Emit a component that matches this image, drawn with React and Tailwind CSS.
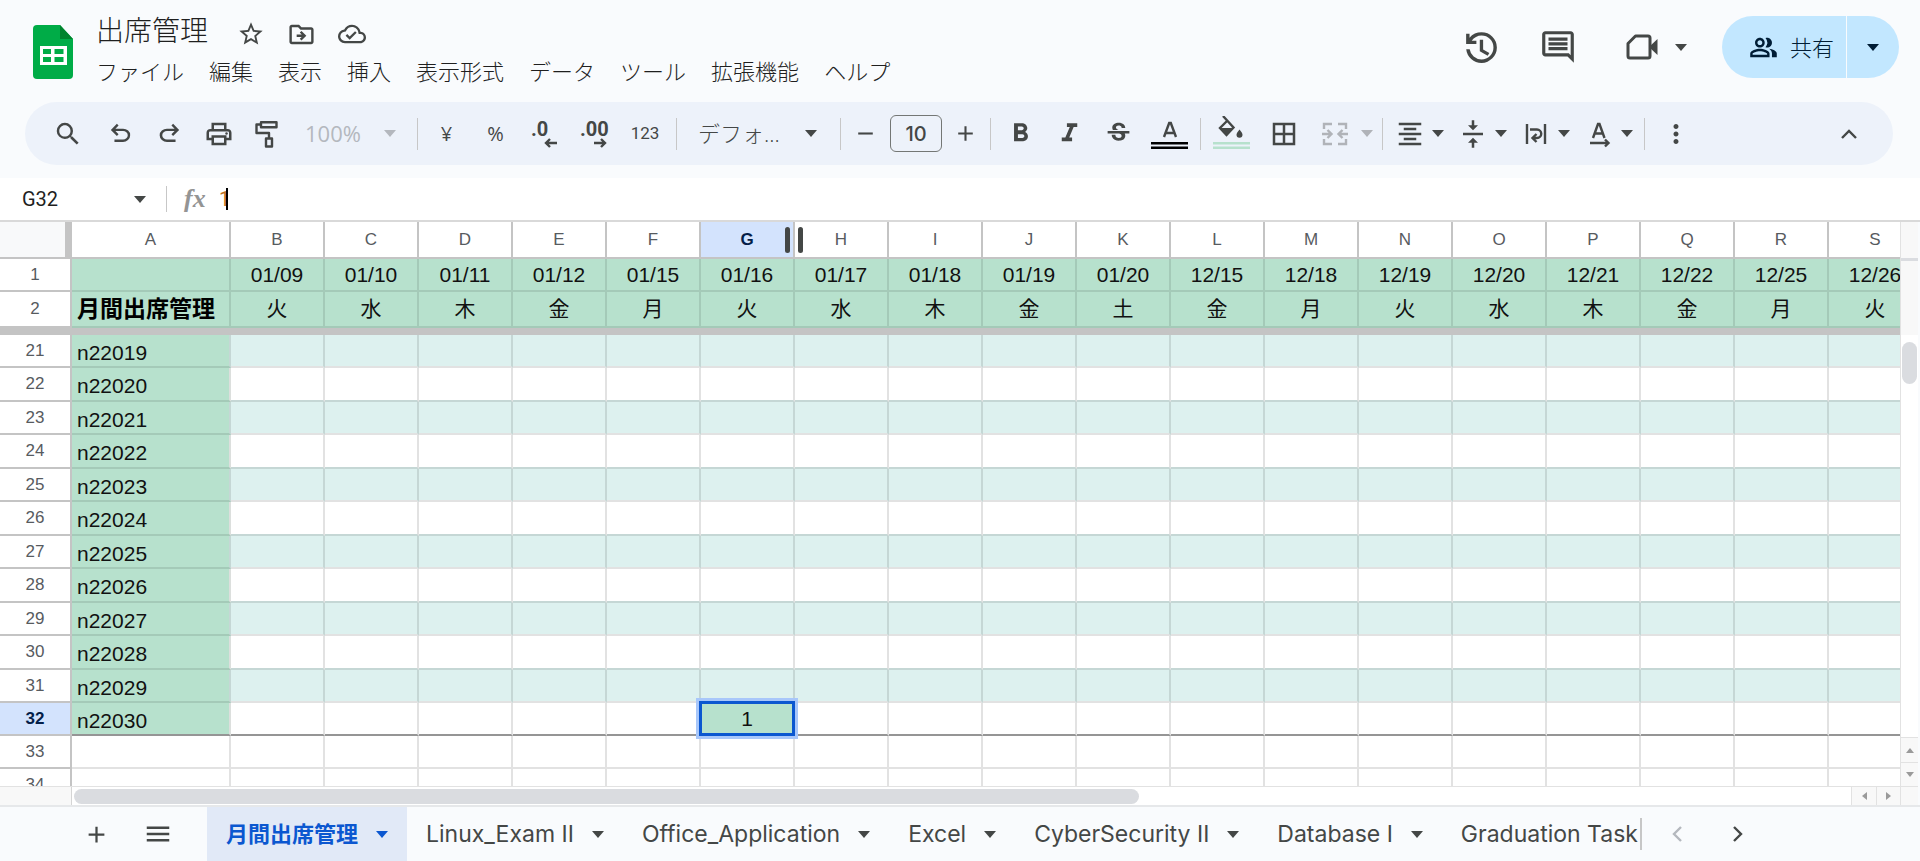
import {
  MdStarBorder,
  MdOutlineDriveFileMove,
  MdOutlineCloudDone,
  MdOutlineInsertComment,
  MdOutlinePeopleAlt,
  MdSearch,
  MdOutlinePrint,
  MdFormatBold,
  MdFormatItalic,
  MdStrikethroughS,
  MdBorderAll,
  MdFormatAlignCenter,
  MdVerticalAlignCenter,
  MdMoreVert,
  MdAdd,
  MdRemove,
  MdMenu,
} from 'react-icons/md';

const MENUS = ['ファイル', '編集', '表示', '挿入', '表示形式', 'データ', 'ツール', '拡張機能', 'ヘルプ'];

const COLUMNS = [
  ['B', '01/09', '火'],
  ['C', '01/10', '水'],
  ['D', '01/11', '木'],
  ['E', '01/12', '金'],
  ['F', '01/15', '月'],
  ['G', '01/16', '火'],
  ['H', '01/17', '水'],
  ['I', '01/18', '木'],
  ['J', '01/19', '金'],
  ['K', '01/20', '土'],
  ['L', '12/15', '金'],
  ['M', '12/18', '月'],
  ['N', '12/19', '火'],
  ['O', '12/20', '水'],
  ['P', '12/21', '木'],
  ['Q', '12/22', '金'],
  ['R', '12/25', '月'],
  ['S', '12/26', '火'],
];

const STUDENT_ROWS = Array.from({ length: 12 }, (_, i) => ({ row: 21 + i, id: `n220${19 + i}` }));

const SHEETS = ['Linux_Exam II', 'Office_Application', 'Excel', 'CyberSecurity II', 'Database I'];

const JP = "font-['Liberation_Sans','Noto_Sans_CJK_JP',sans-serif]";
const UI = "font-['Open_Sans','Noto_Sans_CJK_JP',sans-serif]";
const TAB = "font-['Inter','Noto_Sans_CJK_JP',sans-serif]";

function Caret({ className = '' }) {
  return (
    <svg viewBox="0 0 12 7" className={`h-[7px] w-3 shrink-0 fill-current ${className}`} aria-hidden="true">
      <path d="M0 0h12L6 7z" />
    </svg>
  );
}

function Symbol({ d, className = '' }) {
  return (
    <svg viewBox="0 -960 960 960" className={`shrink-0 fill-current ${className}`} aria-hidden="true">
      <path d={d} />
    </svg>
  );
}

const UNDO =
  'M280-200v-80h284q63 0 109.5-40T720-420q0-60-46.5-100T564-560H312l104 104-56 56-200-200 200-200 56 56-104 104h252q97 0 169.5 63T800-420q0 94-72.5 157T564-200H280Z';
const REDO =
  'M396-200q-97 0-169.5-63T154-420q0-94 72.5-157T396-640h252L544-744l56-56 200 200-200 200-56-56 104-104H396q-63 0-109.5 40T240-420q0 60 46.5 100T396-280h284v80H396Z';
const HISTORY =
  'M480-120q-138 0-240.5-91.5T122-440h82q14 104 92.5 172T480-200q117 0 198.5-81.5T760-480q0-117-81.500-198.500T480-760q-69 0-129 32t-101 88h110v80H120v-240h80v94q51-64 124.5-99T480-840q75 0 140.5 28.5t114 77q48.5 48.5 77 114T840-480q0 75-28.5 140.5t-77 114q-48.5 48.5-114 77T480-120Zm145-165L440-390v-270h78v224l145 85Z';

function Tool({ label, className = 'w-[49px]', children }) {
  return (
    <button type="button" aria-label={label} className={`flex h-12 shrink-0 items-center justify-center ${className}`}>
      {children}
    </button>
  );
}

function MenuTool({ label, className = '', children }) {
  return (
    <button type="button" aria-label={label} className={`flex h-12 shrink-0 items-center ${className}`}>
      {children}
      <Caret />
    </button>
  );
}

function Divider() {
  return <span className="mx-1 h-8 w-px shrink-0 bg-[#c7c7c7]" />;
}

function Header() {
  return (
    <header className="flex h-[102px] shrink-0 items-start">
      <a href="#home" aria-label="スプレッドシート ホーム" className="mt-[25px] ml-[33px] shrink-0">
        <svg viewBox="0 0 40 54" className="h-[54px] w-10">
          <path d="M4 0h23l13 14v36a4 4 0 0 1-4 4H4a4 4 0 0 1-4-4V4a4 4 0 0 1 4-4z" fill="#00ac47" />
          <path d="M27 0l13 14H27z" fill="#00832d" />
          <path
            d="M7 21h27v19H7zM10 24v5h8v-5zM21.500 24v5h9v-5zM10 32v5h8v-5zM21.500 32v5h9v-5z"
            fill="#fff"
            fillRule="evenodd"
          />
        </svg>
      </a>
      <div className="ml-[23px] flex flex-col pt-2 whitespace-nowrap">
        <div className="flex h-11 items-center gap-[22px] text-[#444746]">
          <h1 className="text-[28px] leading-[45px] font-light text-[#1f1f1f]">出席管理</h1>
          <button type="button" aria-label="スター" className="mt-2 ml-[7px]">
            <MdStarBorder size={28} />
          </button>
          <button type="button" aria-label="移動" className="mt-2">
            <MdOutlineDriveFileMove size={29} />
          </button>
          <button type="button" aria-label="保存済み" className="mt-2">
            <MdOutlineCloudDone size={28} />
          </button>
        </div>
        <nav className="flex h-[38px] items-center gap-[25px] text-[22px] font-light text-[#1f1f1f]">
          {MENUS.map((m) => (
            <button type="button" key={m}>
              {m}
            </button>
          ))}
        </nav>
      </div>
      <div className="mt-4 mr-[21px] ml-auto flex h-[62px] shrink-0 items-center text-[#444746]">
        <button type="button" aria-label="変更履歴" className="mr-[37px]">
          <Symbol d={HISTORY} className="h-[41px] w-[41px]" />
        </button>
        <button type="button" aria-label="コメント" className="mr-[49px]">
          <MdOutlineInsertComment size={38} />
        </button>
        <button type="button" aria-label="ビデオ通話" className="mr-[35px] flex items-center gap-[17px]">
          <svg viewBox="0 0 32 26" className="h-[26px] w-8" aria-hidden="true">
            <path
              d="M9.500 2H22a2 2 0 0 1 2 2v18a2 2 0 0 1-2 2H4a2 2 0 0 1-2-2V9.500z"
              fill="none"
              stroke="currentColor"
              strokeWidth="3"
              strokeLinejoin="round"
            />
            <path d="M23 13l8.500-8v16z" fill="currentColor" />
          </svg>
          <Caret />
        </button>
        <div className="flex h-[62px] overflow-hidden rounded-full text-[#001d35]">
          <button type="button" className="flex w-[124px] items-center gap-3 bg-[#c2e7ff] pl-[27px] text-[22px] font-light">
            <MdOutlinePeopleAlt size={29} />
            共有
          </button>
          <button type="button" aria-label="共有オプション" className="ml-px flex w-[52px] items-center justify-center bg-[#c2e7ff]">
            <Caret />
          </button>
        </div>
      </div>
    </header>
  );
}

function Toolbar() {
  return (
    <div
      role="toolbar"
      className="mr-[27px] ml-[25px] flex h-[63px] shrink-0 items-center rounded-full bg-[#edf2fa] pl-[18px] text-[#444746]"
    >
      <Tool label="検索" className="mr-[4px] w-[49px]">
        <MdSearch size={30} />
      </Tool>
      <Tool label="元に戻す">
        <Symbol d={UNDO} className="h-[29px] w-[29px]" />
      </Tool>
      <Tool label="やり直し">
        <Symbol d={REDO} className="h-[29px] w-[29px]" />
      </Tool>
      <Tool label="印刷">
        <MdOutlinePrint size={30} />
      </Tool>
      <Tool label="書式を貼り付け">
        <svg viewBox="0 0 28 28" className="h-7 w-7 fill-none stroke-current stroke-[2.4]" strokeLinejoin="round" aria-hidden="true">
          <path d="M7 2.200h15.500v5H7zM7 4.500H2.500v8.500h12.500v5.500M12 18.500h6v8h-6z" />
        </svg>
      </Tool>
      <label className="flex h-12 w-[121px] shrink-0 items-center pl-[13px] text-[#b4b8be]">
        <select aria-label="ズーム" disabled className="w-[71px] appearance-none bg-transparent text-[22px] opacity-100">
          <option>100%</option>
        </select>
        <Caret className="ml-2" />
      </label>
      <Divider />
      <Tool label="通貨">
        <span className="text-[20px]">¥</span>
      </Tool>
      <Tool label="パーセント">
        <span className="text-[20px]">%</span>
      </Tool>
      <Tool label="小数点以下を減らす">
        <svg viewBox="0 -9 32 48" className="h-12 w-8 font-['Roboto',sans-serif]" aria-hidden="true">
          <text x="2" y="17" fontSize="20" fontWeight="700" fill="currentColor">
            .0
          </text>
          <path d="M28 24H17M21 20l-4 4 4 4" fill="none" stroke="currentColor" strokeWidth="2.400" />
        </svg>
      </Tool>
      <Tool label="小数点以下を増やす">
        <svg viewBox="0 -9 32 48" className="h-12 w-8 font-['Roboto',sans-serif]" aria-hidden="true">
          <text x="2" y="17" fontSize="20" fontWeight="700" fill="currentColor">
            .00
          </text>
          <path d="M16 24h11M23 20l4 4-4 4" fill="none" stroke="currentColor" strokeWidth="2.400" />
        </svg>
      </Tool>
      <Tool label="表示形式の詳細設定" className="w-[54px]">
        <span className="font-['Roboto',sans-serif] text-[17px]">123</span>
      </Tool>
      <Divider />
      <label className="flex h-12 w-[155px] shrink-0 items-center pl-[17px]">
        <select aria-label="フォント" className="w-[90px] appearance-none bg-transparent text-[22px] font-light">
          <option>デフォ...</option>
        </select>
        <Caret className="ml-[17px]" />
      </label>
      <Divider />
      <Tool label="フォントサイズを縮小" className="w-[41px]">
        <MdRemove size={25} />
      </Tool>
      <input
        aria-label="フォントサイズ"
        defaultValue="10"
        className={`mr-0.5 ml-1 h-[37px] w-[52px] shrink-0 rounded-md border border-[#747775] bg-transparent text-center text-[20px] font-medium ${TAB}`}
      />
      <Tool label="フォントサイズを拡大" className="w-[42px]">
        <MdAdd size={25} />
      </Tool>
      <Divider />
      <Tool label="太字" className="w-[50px]">
        <MdFormatBold size={31} />
      </Tool>
      <Tool label="斜体">
        <MdFormatItalic size={31} />
      </Tool>
      <Tool label="取り消し線">
        <MdStrikethroughS size={29} />
      </Tool>
      <Tool label="テキストの色" className="w-[53px]">
        <svg viewBox="0 0 38 36" className="h-9 w-[38px]" aria-hidden="true">
          <path d="M13 21L18.200 7h1.600L25 21M15 17h8" fill="none" stroke="currentColor" strokeWidth="2.400" />
          <path d="M0 26h37v2.500H0zM0 30.500h37V33H0z" fill="#000" />
        </svg>
      </Tool>
      <Divider />
      <Tool label="塗りつぶしの色" className="w-[54px]">
        <svg viewBox="0 0 38 36" className="h-9 w-[38px]" aria-hidden="true">
          <path d="M10 0l10.500 11.500L13.500 19 7 12l7.500-7.500" fill="none" stroke="currentColor" strokeWidth="2.400" />
          <path d="M7 12h13.500l-7 7.500z" fill="currentColor" />
          <path d="M26.500 13.500c2 2.500 3 3.800 3 5.200a3 3 0 0 1-6 0c0-1.400 1-2.700 3-5.200z" fill="currentColor" />
          <path d="M0 26h37v2.500H0zM0 30.500h37V33H0z" fill="#b7e1cd" />
        </svg>
      </Tool>
      <Tool label="枠線">
        <MdBorderAll size={30} />
      </Tool>
      <MenuTool label="セルを結合" className="w-[70px] gap-[13px] pl-[14px] text-[#b0b3b8]">
        <svg viewBox="0 0 26 24" className="h-6 w-[26px] fill-none stroke-current stroke-[2.4]" aria-hidden="true">
          <path d="M2 7V2h8M16 2h8v5M2 17v5h8M16 22h8v-5M0 12h9M5.500 8L9.500 12l-4 4M26 12h-9M20.500 8l-4 4 4 4" />
        </svg>
      </MenuTool>
      <Divider />
      <MenuTool label="水平方向の配置" className="w-[63px] gap-[7px] pl-2">
        <MdFormatAlignCenter size={30} />
      </MenuTool>
      <MenuTool label="垂直方向の配置" className="w-[63px] gap-[7px] pl-2">
        <MdVerticalAlignCenter size={30} />
      </MenuTool>
      <MenuTool label="折り返し" className="w-[63px] gap-[7px] pl-2">
        <svg viewBox="0 0 30 30" className="h-[30px] w-[30px] fill-none stroke-current stroke-[2.4]" aria-hidden="true">
          <path d="M6 5v20M24 5v20M9 10.500h7a4 4 0 0 1 0 8.500h-4M15.500 15L11.500 19l4 4" />
        </svg>
      </MenuTool>
      <MenuTool label="回転" className="w-[64px] gap-[7px] pl-2">
        <svg viewBox="0 0 30 30" className="h-[30px] w-[30px] fill-none stroke-current stroke-[2.4]" aria-hidden="true">
          <path d="M9 19L14 5h1.500l5 14M10.500 14.500H19M6 24h18M21 20.500l3.500 3.500-3.500 3.500" />
        </svg>
      </MenuTool>
      <Divider />
      <Tool label="その他" className="w-[54px]">
        <MdMoreVert size={30} />
      </Tool>
      <Tool label="メニューを非表示" className="mr-5 ml-auto w-12">
        <svg viewBox="0 0 18 12" className="h-3 w-[18px] fill-none stroke-current stroke-[2.4]" aria-hidden="true">
          <path d="M2 10l7-7 7 7" />
        </svg>
      </Tool>
    </div>
  );
}

function FormulaBar() {
  return (
    <div className="flex h-11 shrink-0 items-center border-b-2 border-[#d9d9d9] bg-white pl-[22px]">
      <input
        aria-label="名前ボックス"
        defaultValue="G32"
        className="w-28 bg-transparent font-['Roboto',sans-serif] text-[20px] text-[#1f1f1f]"
      />
      <Caret className="text-[#444746]" />
      <span className="ml-5 h-[26px] w-px bg-[#c7c7c7]" />
      <span className="ml-[17px] w-[35px] font-['Liberation_Serif',serif] text-[26px] leading-6 font-bold text-[#949494] italic">fx</span>
      <input
        aria-label="数式バー"
        defaultValue="1"
        className="w-[7px] bg-transparent font-['Roboto',sans-serif] text-[20px] text-[#c0701a]"
      />
      <span className="h-[22px] w-0.5 bg-black" />
    </div>
  );
}

function Grid() {
  const rowHead = 'border-r-2 border-b-2 border-[#c4c4c4] p-0 text-[17px] text-center';
  const greenCell = 'border-r-2 border-b-2 border-[#a4cab8] bg-[#b7e1cd] p-0';
  return (
    <div className={`min-w-0 flex-1 overflow-hidden bg-white ${JP}`}>
      <table className="w-[1923px] table-fixed border-separate border-spacing-0 text-[21px] leading-6 text-[#111]">
        <colgroup>
          <col className="w-[72px]" />
          <col className="w-[159px]" />
          {COLUMNS.map(([c]) => (
            <col key={c} className="w-[94px]" />
          ))}
        </colgroup>
        <thead>
          <tr className="h-[37px] text-[17px] text-[#575b5f]">
            <td className="border-r-[7px] border-b-2 border-[#c4c4c4] bg-[#f8f9fa] p-0" />
            <th scope="col" className="border-r-2 border-b-2 border-[#c4c4c4] p-0 font-normal">
              A
            </th>
            {COLUMNS.map(([c]) =>
              c === 'G' ? (
                <th key={c} scope="col" className="relative border-r-2 border-b-2 border-[#c4c4c4] bg-[#d3e3fd] p-0 font-bold text-[#041e49]">
                  G
                  <span className="absolute top-[5px] right-[3px] h-[26px] w-[5px] rounded-sm bg-[#444746]" />
                  <span className="absolute top-[5px] -right-[10px] h-[26px] w-[5px] rounded-sm bg-[#444746]" />
                </th>
              ) : (
                <th key={c} scope="col" className="border-r-2 border-b-2 border-[#c4c4c4] p-0 font-normal">
                  {c}
                </th>
              ),
            )}
          </tr>
        </thead>
        <tbody>
          <tr className="h-[33px]">
            <th scope="row" className={`${rowHead} font-normal text-[#575b5f]`}>
              1
            </th>
            <td className={greenCell} />
            {COLUMNS.map(([c, date]) => (
              <td key={c} className={`${greenCell} text-center`}>
                {date}
              </td>
            ))}
          </tr>
          <tr className="h-9">
            <th scope="row" className={`${rowHead} border-b-0 font-normal text-[#575b5f]`}>
              2
            </th>
            <td className="overflow-hidden border-r-2 border-b-2 border-[#a4cab8] bg-[#b7e1cd] p-0 pl-[5px] text-[23px] font-bold whitespace-nowrap text-black">
              月間出席管理
            </td>
            {COLUMNS.map(([c, , day]) => (
              <td key={c} className={`${greenCell} text-center`}>
                {day}
              </td>
            ))}
          </tr>
          <tr className="h-[7px]">
            <td colSpan={20} className="bg-[#c4c4c4] p-0" />
          </tr>
          {STUDENT_ROWS.map(({ row, id }) => {
            const banded = row % 2 === 1;
            const last = row === 32;
            const line = last
              ? 'border-b-[#959595]'
              : banded
                ? 'border-b-[#e2e2e2]'
                : 'border-b-[#c5d7d5]';
            return (
              <tr key={row} className={banded || last ? 'h-[33px]' : 'h-[34px]'}>
                <th
                  scope="row"
                  className={`${rowHead} ${last ? 'bg-[#d3e3fd] font-bold text-[#041e49]' : 'font-normal text-[#575b5f]'}`}
                >
                  {row}
                </th>
                <td
                  className={`border-r-2 border-b-2 bg-[#b7e1cd] p-0 pt-1 pl-[5px] ${banded ? 'border-r-[#c5d7d5]' : 'border-r-[#dcdfdd]'} ${last ? 'border-b-[#959595]' : 'border-b-[#a4cab8]'}`}
                >
                  {id}
                </td>
                {COLUMNS.map(([c]) =>
                  last && c === 'G' ? (
                    <td key={c} className="relative border-r-2 border-b-2 border-[#959595] bg-[#b7e1cd] p-0 text-center">
                      1
                      <span className="absolute -inset-0.5 border-[3px] border-[#0b57d0] ring-[3px] ring-[#a8c7fa]" />
                    </td>
                  ) : (
                    <td
                      key={c}
                      className={`border-r-2 border-b-2 p-0 ${line} ${banded ? 'border-r-[#c5d7d5] bg-[#ddf1ef]' : 'border-r-[#e2e2e2]'}`}
                    />
                  ),
                )}
              </tr>
            );
          })}
          {[33, 34].map((row) => (
            <tr key={row} className="h-[33px]">
              <th scope="row" className={`${rowHead} font-normal text-[#575b5f]`}>
                {row}
              </th>
              <td className="border-r-2 border-b-2 border-[#e2e2e2] p-0" />
              {COLUMNS.map(([c]) => (
                <td key={c} className="border-r-2 border-b-2 border-[#e2e2e2] p-0" />
              ))}
            </tr>
          ))}
        </tbody>
      </table>
    </div>
  );
}

function VerticalScroll() {
  return (
    <div className="mr-0.5 flex w-[18px] shrink-0 flex-col border-l border-[#e2e2e2] bg-white text-[#9a9a9a]">
      <div className="h-9 bg-[#f8f8f8]" />
      <div className="h-[3px] bg-[#dadce0]" />
      <div className="h-[74px] bg-[#f8f8f8]" />
      <div className="mx-px mt-[7px] h-[42px] rounded-full bg-[#dadce0]" />
      <button type="button" aria-label="上へスクロール" className="mt-auto flex h-[25px] items-center justify-center border-t border-[#e2e2e2] bg-[#f8f8f8]">
        <svg viewBox="0 0 8 5" className="h-[5px] w-2 fill-current">
          <path d="M0 5h8L4 0z" />
        </svg>
      </button>
      <button type="button" aria-label="下へスクロール" className="flex h-6 items-center justify-center border-t border-[#e2e2e2] bg-[#f8f8f8]">
        <svg viewBox="0 0 8 5" className="h-[5px] w-2 fill-current">
          <path d="M0 0h8L4 5z" />
        </svg>
      </button>
    </div>
  );
}

function HorizontalScroll() {
  return (
    <div className="mr-0.5 flex h-[19px] shrink-0 border-t border-[#e2e2e2] bg-white text-[#9a9a9a]">
      <div className="w-[72px] shrink-0 border-r border-[#d5d5d5] bg-[#f8f8f8]" />
      <div className="min-w-0 flex-1 px-0.5 pt-0.5">
        <div className="h-[15px] w-3/5 rounded-full bg-[#dadce0]" />
      </div>
      <button type="button" aria-label="左へスクロール" className="flex w-[25px] items-center justify-center border-l border-[#e2e2e2] bg-[#f8f8f8]">
        <svg viewBox="0 0 5 8" className="h-2 w-[5px] fill-current">
          <path d="M5 0v8L0 4z" />
        </svg>
      </button>
      <button type="button" aria-label="右へスクロール" className="flex w-6 items-center justify-center border-l border-[#e2e2e2] bg-[#f8f8f8]">
        <svg viewBox="0 0 5 8" className="h-2 w-[5px] fill-current">
          <path d="M0 0v8l5-4z" />
        </svg>
      </button>
      <div className="w-[18px] shrink-0 border-l border-[#e2e2e2] bg-[#f8f8f8]" />
    </div>
  );
}

function SheetTabs() {
  return (
    <footer className="flex h-14 shrink-0 items-stretch border-t-2 border-[#e6e8ea] text-[#444746]">
      <button type="button" aria-label="シートを追加" className="ml-[73px] flex w-[46px] items-center justify-center">
        <MdAdd size={27} />
      </button>
      <button type="button" aria-label="すべてのシート" className="mr-[26px] ml-4 flex w-[46px] items-center justify-center">
        <MdMenu size={30} />
      </button>
      <div className={`flex w-[1433px] min-w-0 shrink overflow-hidden whitespace-nowrap ${TAB}`}>
        <button
          type="button"
          className="flex shrink-0 items-center gap-[18px] bg-[#e1e9f7] px-[19px] text-[22px] font-bold text-[#0b57d0]"
        >
          月間出席管理
          <Caret />
        </button>
        {SHEETS.map((s) => (
          <button type="button" key={s} className="flex shrink-0 items-center gap-[18px] px-[19px] text-[23px]">
            {s}
            <Caret />
          </button>
        ))}
        <button type="button" className="flex shrink-0 items-center pl-[19px] text-[23px]">
          Graduation Task
        </button>
      </div>
      <span className="h-8 w-0.5 shrink-0 self-center bg-[#c7c7c7]" />
      <button type="button" aria-label="前へ" className="ml-2.5 flex w-[50px] shrink-0 items-center justify-center text-[#b4b8be]">
        <svg viewBox="0 0 10 16" className="h-4 w-2.5 fill-none stroke-current stroke-[2.4]">
          <path d="M9 1L2 8l7 7" />
        </svg>
      </button>
      <button type="button" aria-label="次へ" className="ml-[11px] flex w-[50px] shrink-0 items-center justify-center">
        <svg viewBox="0 0 10 16" className="h-4 w-2.5 fill-none stroke-current stroke-[2.4]">
          <path d="M1 1l7 7-7 7" />
        </svg>
      </button>
    </footer>
  );
}

export default function App() {
  return (
    <div lang="ja" className={`flex h-screen flex-col overflow-hidden bg-[#f9fbfd] ${UI}`}>
      <Header />
      <Toolbar />
      <div className="h-[13px] shrink-0" />
      <FormulaBar />
      <main className="flex min-h-0 flex-1">
        <Grid />
        <VerticalScroll />
      </main>
      <HorizontalScroll />
      <SheetTabs />
    </div>
  );
}
